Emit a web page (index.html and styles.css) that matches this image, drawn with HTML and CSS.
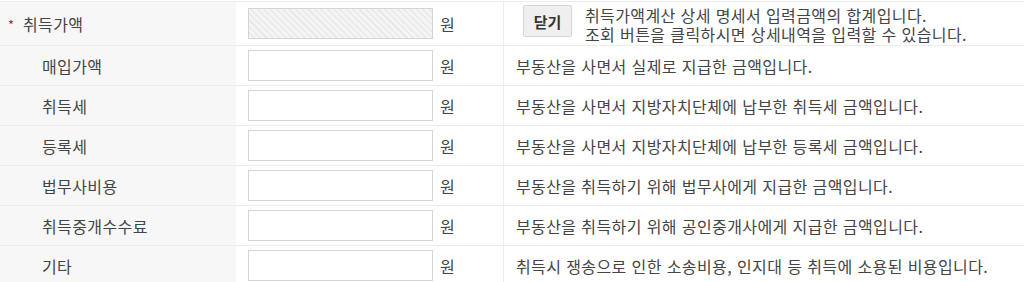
FILE: index.html
```html
<!DOCTYPE html>
<html lang="ko">
<head>
<meta charset="utf-8">
<link rel="stylesheet" href="styles.css">
</head>
<body>
<div class="form-table">
  <div class="row row-main">
    <div class="cell label"><span class="req">*</span>취득가액</div>
    <div class="cell field"><input class="amount disabled" type="text" disabled><span class="unit">원</span></div>
    <div class="cell desc desc-main">
      <button class="btn" type="button">닫기</button>
      <p class="desc-text"><span class="line">취득가액계산 상세 명세서 입력금액의 합계입니다.</span><span class="line">조회 버튼을 클릭하시면 상세내역을 입력할 수 있습니다.</span></p>
    </div>
  </div>
  <div class="row">
    <div class="cell label sub">매입가액</div>
    <div class="cell field"><input class="amount" type="text"><span class="unit">원</span></div>
    <div class="cell desc">부동산을 사면서 실제로 지급한 금액입니다.</div>
  </div>
  <div class="row">
    <div class="cell label sub">취득세</div>
    <div class="cell field"><input class="amount" type="text"><span class="unit">원</span></div>
    <div class="cell desc">부동산을 사면서 지방자치단체에 납부한 취득세 금액입니다.</div>
  </div>
  <div class="row">
    <div class="cell label sub">등록세</div>
    <div class="cell field"><input class="amount" type="text"><span class="unit">원</span></div>
    <div class="cell desc">부동산을 사면서 지방자치단체에 납부한 등록세 금액입니다.</div>
  </div>
  <div class="row">
    <div class="cell label sub">법무사비용</div>
    <div class="cell field"><input class="amount" type="text"><span class="unit">원</span></div>
    <div class="cell desc">부동산을 취득하기 위해 법무사에게 지급한 금액입니다.</div>
  </div>
  <div class="row">
    <div class="cell label sub">취득중개수수료</div>
    <div class="cell field"><input class="amount" type="text"><span class="unit">원</span></div>
    <div class="cell desc">부동산을 취득하기 위해 공인중개사에게 지급한 금액입니다.</div>
  </div>
  <div class="row">
    <div class="cell label sub">기타</div>
    <div class="cell field"><input class="amount" type="text"><span class="unit">원</span></div>
    <div class="cell desc">취득시 쟁송으로 인한 소송비용, 인지대 등 취득에 소용된 비용입니다.</div>
  </div>
</div>
</body>
</html>
```

FILE: styles.css
```css
* { box-sizing: border-box; }
html, body { margin: 0; padding: 0; background: #fff; }
body {
  font-family: "Noto Sans CJK KR", "Noto Sans", sans-serif;
  color: #444;
  padding-top: 1px;
  font-size: 16px;
  letter-spacing: 0.4px;
}
.form-table {
  border-top: 1px solid #ececec;
}
.row {
  display: grid;
  grid-template-columns: 236px 267px 1fr;
  border-bottom: 1px solid #ececec;
  min-height: 40px;
}
.row-main { min-height: 44px; }
.cell {
  display: flex;
  align-items: center;
  white-space: nowrap;
}
.label {
  background: #f7f7f7;
  padding-left: 8px;
}
.label.sub { padding-left: 42px; }
.req {
  color: #c8102e;
  font-size: 13px;
  width: 15px;
  line-height: 1;
  margin-top: 2px;
}
.field {
  padding-left: 12px;
}
.amount {
  width: 185px;
  height: 31px;
  border: 1px solid #d4d4d4;
  background: #fff;
  margin: 0;
  padding: 0 6px;
  font: inherit;
}
.amount.disabled {
  background: repeating-linear-gradient(45deg, #f4f4f4 0, #f4f4f4 3px, #e9e9e9 3px, #e9e9e9 4.5px);
}
.unit {
  margin-left: 7px;
}
.desc {
  border-left: 1px solid #ececec;
  padding-left: 12px;
}
.desc-main {
  padding-left: 19px;
  gap: 13px;
}
.btn {
  width: 49px;
  height: 32px;
  border: 1px solid #d6d6d6;
  border-radius: 2px;
  background: #efefef;
  font-family: inherit;
  font-size: 15px;
  font-weight: bold;
  color: #333;
  padding: 0;
  margin-top: -5px;
}
.desc-text {
  margin: 0;
  display: flex;
  flex-direction: column;
  gap: 1px;
  line-height: 18px;
  margin-top: 2px;
}
.line { display: block; }
```
